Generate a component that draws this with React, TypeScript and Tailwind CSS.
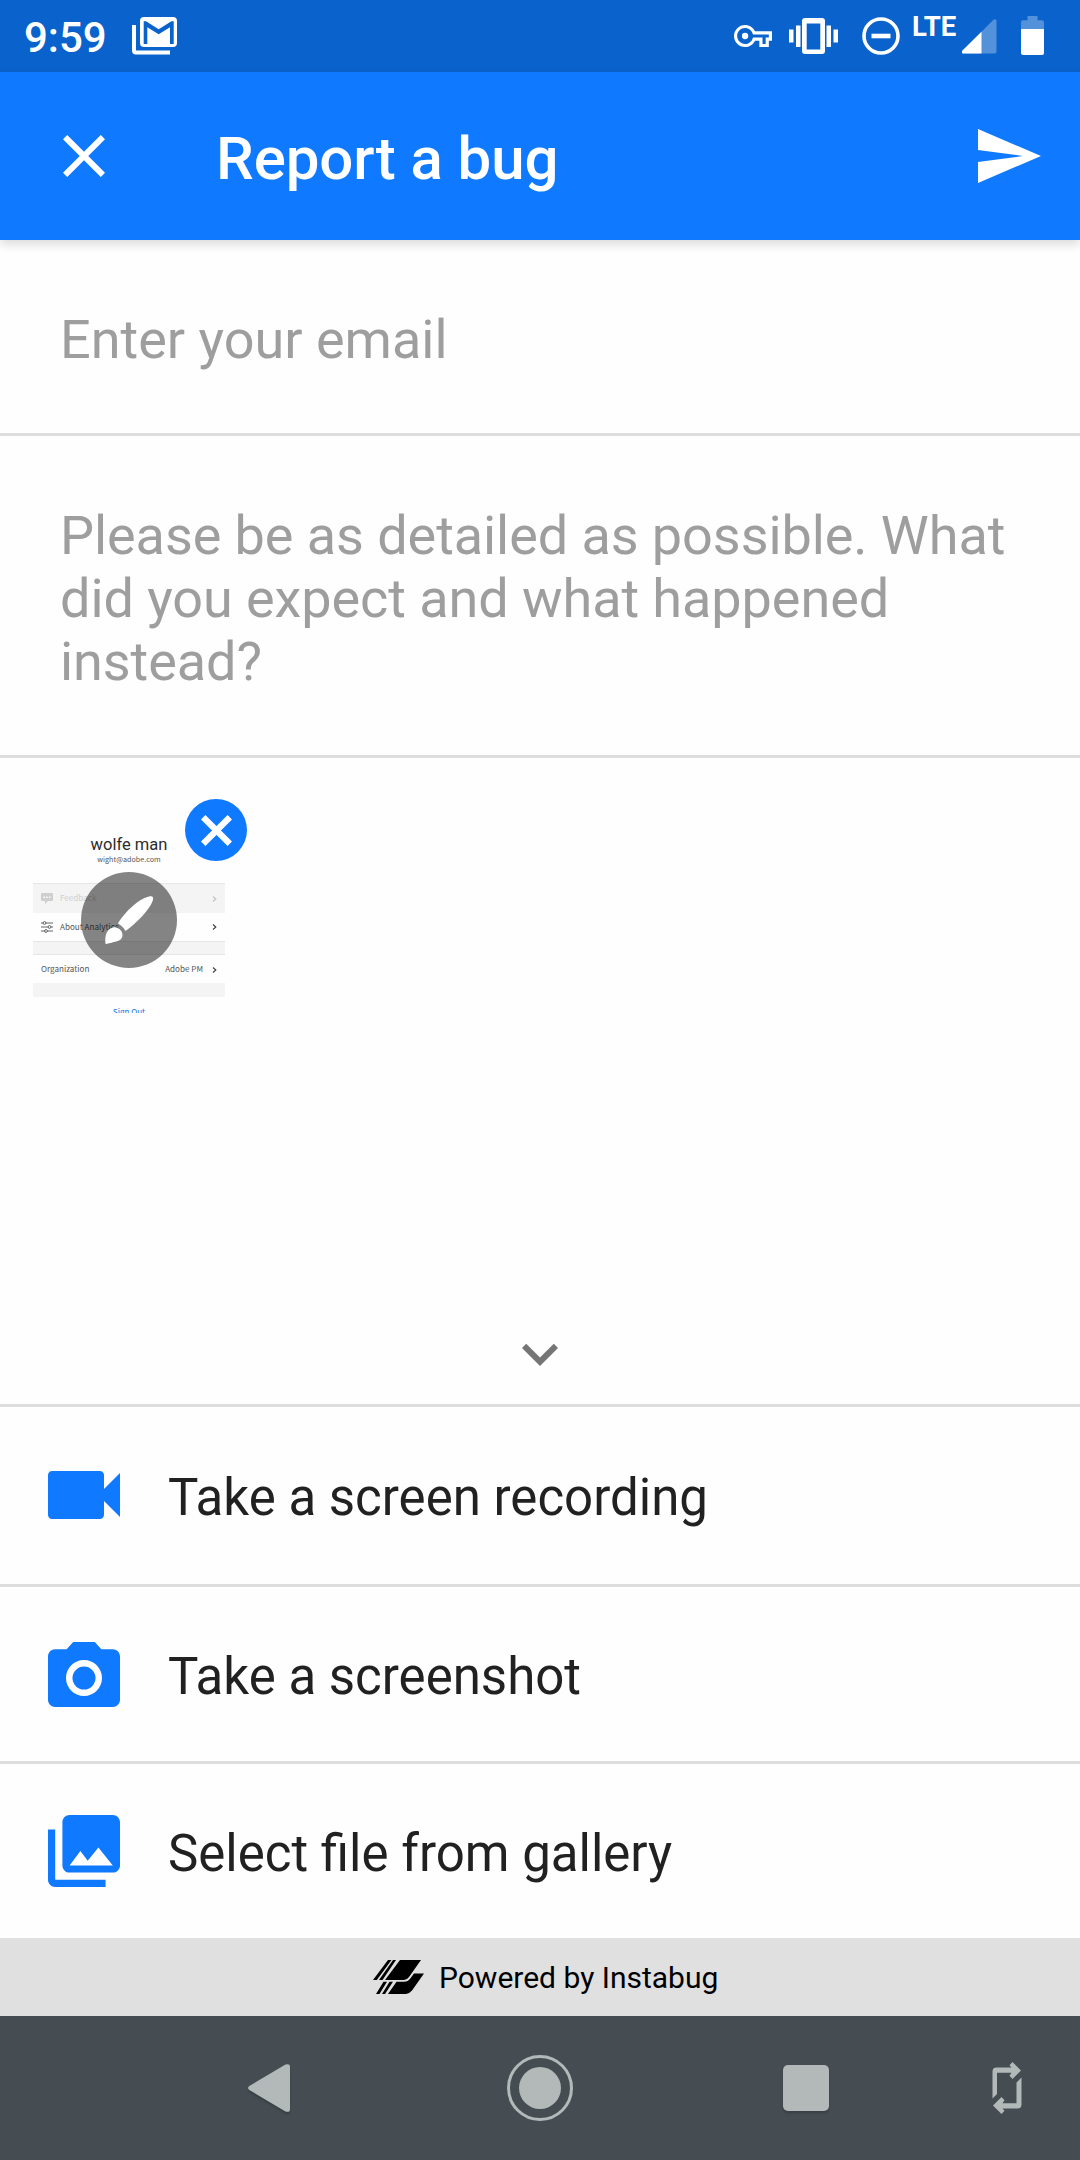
import React from "react";

function GmailIcon() {
  return (
    <svg width="46" height="40" viewBox="0 0 46 40" className="shrink-0">
      <path d="M0 9h4v25.500h34V38.500H4a4 4 0 0 1-4-4z" fill="#fff" />
      <rect x="8" y="1" width="37" height="30" rx="4" fill="#fff" />
      <path
        d="M11.700 5.300h2.300l12.700 8 12.700-8h2.300V28H38V11.300l-11.300 6.900-11.400-6.900V28h-3.600z"
        fill="#0a62cc"
      />
    </svg>
  );
}

function KeyIcon() {
  return (
    <svg width="38" height="38" viewBox="0 0 24 24" fill="#fff" className="shrink-0">
      <path d="M22 19h-6v-4h-2.680c-1.140 2.420-3.600 4-6.320 4-3.860 0-7-3.140-7-7s3.140-7 7-7c2.720 0 5.170 1.580 6.320 4H24v6h-2v4zm-4-2h2v-4h2v-2H11.940l-.23-.67C11.010 8.340 9.110 7 7 7c-2.760 0-5 2.240-5 5s2.240 5 5 5c2.110 0 4.010-1.340 4.710-3.330l.23-.67H18v4z" />
      <circle cx="7" cy="12" r="2" />
    </svg>
  );
}

function VibrateIcon() {
  return (
    <svg width="49" height="36" viewBox="0 0 49 36" fill="#fff" className="shrink-0">
      <rect x="0" y="11.500" width="4.500" height="13" />
      <rect x="7" y="7.500" width="4.500" height="21.500" />
      <rect x="37.500" y="7.500" width="4.500" height="21.500" />
      <rect x="44.500" y="11.500" width="4.500" height="13" />
      <path fillRule="evenodd" d="M16 0h17a3 3 0 0 1 3 3v30a3 3 0 0 1-3 3H16a3 3 0 0 1-3-3V3a3 3 0 0 1 3-3zm1.700 5.500v26h13.600v-26z" />
    </svg>
  );
}

function StatusBar() {
  return (
    <div className="flex h-[72px] items-center bg-[#0a62cc] pl-6 text-white">
      <span className="w-[108px] pt-[3px] text-[42px] leading-none font-medium">9:59</span>
      <GmailIcon />
      <div className="flex-1" />
      <KeyIcon />
      <div className="w-[17px]" />
      <VibrateIcon />
      <svg width="38" height="38" viewBox="0 0 38 38" className="ml-6 shrink-0">
        <circle cx="19" cy="19" r="17" fill="none" stroke="#fff" strokeWidth="3.600" />
        <rect x="9.500" y="16.700" width="19" height="4.600" fill="#fff" />
      </svg>
      <span className="mb-[18px] ml-3 w-[50px] text-[27.500px] leading-none font-bold">LTE</span>
      <svg width="35" height="35" viewBox="0 0 35 35" className="shrink-0">
        <path d="M0 32 L31.500 0.800 Q34.500 -0.500 34.500 2 V32.500 Q34.500 34.500 32.500 34.500 H1 Q-0.500 34 0 32z" fill="#fff" fillOpacity="0.300" />
        <path d="M0 32 L19.500 12.700 V34.500 H1 Q-0.500 34 0 32z" fill="#fff" />
      </svg>
      <svg width="23" height="39" viewBox="0 0 23 39" className="mr-9 mb-[1px] ml-6 shrink-0">
        <path d="M6.500 0h10v4.300H21a2 2 0 0 1 2 2V13H0V6.300a2 2 0 0 1 2-2h4.500z" fill="#fff" fillOpacity="0.300" />
        <path d="M0 13h23v24a2 2 0 0 1-2 2H2a2 2 0 0 1-2-2z" fill="#fff" />
      </svg>
    </div>
  );
}

function AppBar() {
  return (
    <div className="z-10 flex h-[168px] items-center bg-[#0f7aff] px-9 pl-12 text-white shadow-[0_4px_10px_rgba(0,0,0,0.15)]">
      <svg width="72" height="72" viewBox="0 0 24 24" fill="#fff">
        <path d="M19 6.410L17.590 5 12 10.590 6.410 5 5 6.410 10.590 12 5 17.590 6.410 19 12 13.410 17.590 19 19 17.590 13.410 12z" />
      </svg>
      <h1 className="ml-24 flex-1 pt-[5px] text-[60px] leading-none font-medium tracking-[-0.100px]">Report a bug</h1>
      <svg width="72" height="72" viewBox="0 0 24 24" fill="#fff">
        <path d="M2.010 21L23 12 2.010 3 2 10l15 2-15 2z" />
      </svg>
    </div>
  );
}

function Chevron({ color }: { color: string }) {
  return (
    <svg width="5" height="8" viewBox="0 0 5 8" fill="none" stroke={color} strokeWidth="1.200">
      <path d="M1 1.500 3.800 4 1 6.500" />
    </svg>
  );
}

function Thumbnail() {
  return (
    <div className="relative h-[192px] w-[192px]">
      <div className="h-[189px] overflow-hidden font-['Noto_Sans_CJK_SC','Noto_Sans',sans-serif] text-[8.100px] leading-none whitespace-nowrap text-[#555]">
        <div className="flex h-[59px] flex-col items-center pt-[12px]">
          <div className="font-['Roboto',sans-serif] text-[16.500px] leading-[18px] text-[#2c2c2c]">wolfe man</div>
          <div className="text-[7.200px] leading-[11px]">wight@adobe.com</div>
        </div>
        <div className="flex h-[30px] items-center border-t border-[#e6e6e6] bg-[#f4f4f4] pr-2 pl-2 text-[#cfcfcf]">
          <svg width="12" height="11" viewBox="0 0 12 11" fill="#cfcfcf">
            <path d="M1 0h10a1 1 0 0 1 1 1v6a1 1 0 0 1-1 1H7l-3 3V8H1a1 1 0 0 1-1-1V1a1 1 0 0 1 1-1z" />
            <path d="M2.500 3.500h1.500v1.500H2.500zM5.200 3.500h1.500v1.500H5.200zM8 3.500h1.500v1.500H8z" fill="#fff" />
          </svg>
          <span className="ml-[7px] flex-1">Feedback</span>
          <Chevron color="#c4c4c4" />
        </div>
        <div className="flex h-[28px] items-center pr-2 pl-2">
          <svg width="12" height="12" viewBox="0 0 12 12" stroke="#555" strokeWidth="0.900" fill="#fff">
            <path d="M0 2h12M0 6h12M0 10h12" />
            <circle cx="3.500" cy="2" r="1.400" />
            <circle cx="8.500" cy="6" r="1.400" />
            <circle cx="5" cy="10" r="1.400" />
          </svg>
          <span className="ml-[7px] flex-1">About Analytics</span>
          <Chevron color="#444" />
        </div>
        <div className="h-[14px] border-y border-[#e6e6e6] bg-[#f4f4f4]" />
        <div className="flex h-[28px] items-center pt-[1px] pr-2 pl-2">
          <span className="flex-1">Organization</span>
          <span className="mr-[9px]">Adobe PM</span>
          <Chevron color="#444" />
        </div>
        <div className="h-[14px] rounded-b-[2px] bg-[#f4f4f4]" />
        <div className="pt-[11px] text-center text-[#1473e6]">Sign Out</div>
      </div>
      <div className="absolute top-12 left-12 h-24 w-24 rounded-full bg-black/48">
        <svg width="96" height="96" viewBox="0 0 96 96" fill="#fff">
          <path d="M37 51.500C43 41.500 56 27.500 68 24.500C71.500 23.500 72.800 25 71.800 28.500C69 37 56 51 44.500 59C43 56 40 53.300 37 51.500z" />
          <path d="M24.500 71.800C23.500 63 26 56 33.500 55.200C38 55 42 59.500 41.500 64C40 70 34 69.500 27 71.600C26 72 25 72.200 24.500 71.800z" />
        </svg>
      </div>
      <div className="absolute -top-[25px] left-[152px] flex h-[62px] w-[62px] items-center justify-center rounded-full bg-[#0f7aff]">
        <svg width="31" height="31" viewBox="0 0 31 31" stroke="#fff" strokeWidth="6.200">
          <path d="M2.200 2.200 28.800 28.800M28.800 2.200 2.200 28.800" />
        </svg>
      </div>
    </div>
  );
}

const actions = [
  {
    label: "Take a screen recording",
    row: "h-[177px]",
    icon: (
      <svg width="72" height="48" viewBox="3 6 18 12" fill="#0f7aff" className="mb-[1px]">
        <path d="M17 10.500V7c0-.55-.45-1-1-1H4c-.55 0-1 .45-1 1v10c0 .55.45 1 1 1h12c.55 0 1-.45 1-1v-3.500l4 4v-11l-4 4z" />
      </svg>
    ),
  },
  {
    label: "Take a screenshot",
    row: "h-[177px] border-t-[3px] border-[#dddddd]",
    icon: (
      <svg width="72" height="65" viewBox="2 2 20 18" fill="#0f7aff">
        <circle cx="12" cy="12" r="3.200" />
        <path d="M9 2L7.170 4H4c-1.100 0-2 .9-2 2v12c0 1.100.9 2 2 2h16c1.100 0 2-.9 2-2V6c0-1.100-.9-2-2-2h-3.170L15 2H9zm3 15c-2.760 0-5-2.240-5-5s2.240-5 5-5 5 2.240 5 5-2.240 5-5 5z" />
      </svg>
    ),
  },
  {
    label: "Select file from gallery",
    row: "h-[177px] border-t-[3px] border-[#dddddd]",
    icon: (
      <svg width="72" height="72" viewBox="2 2 20 20" fill="#0f7aff">
        <path d="M22 16V4c0-1.100-.9-2-2-2H8c-1.100 0-2 .9-2 2v12c0 1.100.9 2 2 2h12c1.100 0 2-.9 2-2zm-11-4l2.030 2.710L16 11l4 5H8l3-4zM2 6v14c0 1.100.9 2 2 2h14v-2H4V6H2z" />
      </svg>
    ),
  },
];

function InstabugLogo() {
  return (
    <svg width="51" height="34" viewBox="0 0 51 34" className="mb-[1px] shrink-0">
      <path d="M15 0h3.500L3.800 20H0zM20 0h3L9.500 20H6zM27 0h21L36 17q-2 3-5 3H12z" fill="#000" />
      <path d="M10.500 21.800h3.500L6.500 34H3zM16.500 21.800H20L12 34H9zM23.500 21.800H31q4 0 6.500-3.500L41 13.500h10L39 30.500q-3 3.500-6 3.500H15z" fill="#000" />
    </svg>
  );
}

function NavBar() {
  return (
    <div className="flex h-36 items-center bg-[#454d53] pl-[248px]">
      <svg width="42" height="48" viewBox="0 0 42 48" className="shrink-0 drop-shadow-[0_2px_1px_rgba(0,0,0,0.2)]">
        <path d="M1.300 22 37.500 0.600Q42 -1 42 3V45Q42 49 37.500 47.400L1.300 26Q-1.200 24 1.300 22z" fill="#b3b8b9" />
      </svg>
      <svg width="66" height="66" viewBox="0 0 66 66" className="ml-[217px] shrink-0">
        <circle cx="33" cy="33" r="31.500" fill="none" stroke="#b3b8b9" strokeWidth="3" />
        <circle cx="33" cy="33" r="21" fill="#b3b8b9" />
      </svg>
      <div className="ml-[210px] h-[46px] w-[46px] rounded-[5px] bg-[#b3b8b9] shadow-[0_2px_3px_rgba(0,0,0,0.2)]" />
      <svg width="30" height="52" viewBox="0 0 30 52" className="ml-[163px] shrink-0" fill="#b3b8b9">
        <path d="M0.500 36.500V9.500Q0.500 5.500 4.500 5.500H19.500L17.500 3.200 20.500 0 29 8.500 20.500 17 17.500 13.800 19.500 10.800H5V32z" />
        <path d="M29.500 15.500V42.500Q29.500 46.500 25.500 46.500H10.500L12.500 48.800 9.500 52 1 43.500 9.500 35 12.500 38.200 10.500 41.200H24.500V20.500z" />
      </svg>
    </div>
  );
}

export default function App() {
  return (
    <div className="flex h-[2160px] w-[1080px] flex-col overflow-hidden bg-[#fefefe] font-['Roboto',sans-serif]">
      <StatusBar />
      <AppBar />
      <div className="h-[196px] border-b-[3px] border-[#dddddd] px-[60px] pt-[68px] text-[54px] leading-[63px] text-[#9e9e9e]">
        Enter your email
      </div>
      <div className="h-[322px] border-b-[3px] border-[#dddddd] px-[60px] pt-[68px] text-[54px] leading-[63px] tracking-[-0.070px] whitespace-nowrap text-[#9e9e9e]">
        <p>Please be as detailed as possible. What</p>
        <p>did you expect and what happened</p>
        <p>instead?</p>
      </div>
      <div className="flex h-[646px] flex-col justify-between pt-[66px] pl-[33px]">
        <Thumbnail />
        <svg width="72" height="72" viewBox="0 0 24 24" fill="#757575" className="mb-[14px] ml-[471px]">
          <path d="M7.410 8.590L12 13.170l4.590-4.580L18 10l-6 6-6-6z" />
        </svg>
      </div>
      <div className="border-t-[3px] border-[#dddddd]">
        {actions.map((a) => (
          <div key={a.label} className={"flex items-center " + a.row}>
            <div className="flex w-[168px] justify-center">{a.icon}</div>
            <span className="pt-[5px] text-[51px] leading-[60px] text-[#212121]">{a.label}</span>
          </div>
        ))}
      </div>
      <div className="flex h-[78px] items-center bg-[#e0e0e0] pl-[373px]">
        <InstabugLogo />
        <span className="ml-[15px] pt-[2px] text-[30px] leading-none text-black">Powered by Instabug</span>
      </div>
      <NavBar />
    </div>
  );
}
